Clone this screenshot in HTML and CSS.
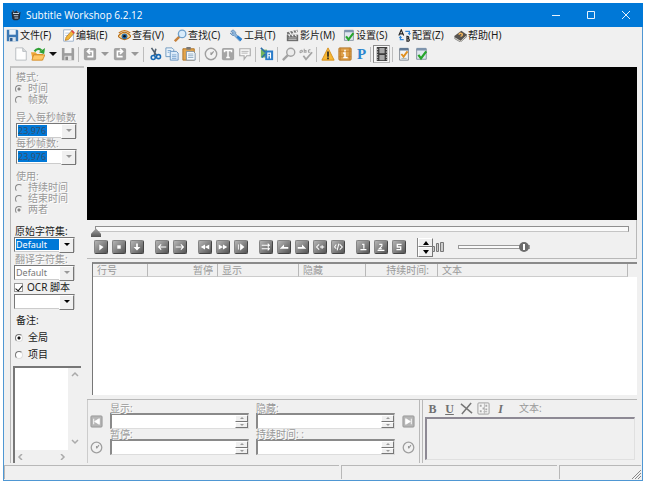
FILE: index.html
```html
<!DOCTYPE html>
<html lang="zh-CN">
<head>
<meta charset="utf-8">
<title>Subtitle Workshop 6.2.12</title>
<link rel="stylesheet" href="styles.css">
</head>
<body>
<svg class="sprite" aria-hidden="true">
  <symbol id="app" viewBox="0 0 16 16"><path d="M2 5l2-4 2 3 3-2 2 3 3-1-1 9-3 2H5l-2-2z" fill="#222b38"/><path d="M4 6h8M5 9h6M6 12h5" stroke="#c9d2dc" stroke-width="1.5"/><path d="M3 2l2 3M9 3l4 2" stroke="#8794a5"/></symbol>
  <symbol id="disk" viewBox="0 0 16 16"><path d="M1 1h13l1 1v13H1z" fill="#3b78b5"/><path d="M4 1h8v6H4z" fill="#e9f2fa"/><path d="M4 10h8v5H4z" fill="#d8e3ec"/><path d="M5 11h3v4H5z" fill="#2b5b91"/></symbol>
  <symbol id="disk-off" viewBox="0 0 16 16"><path d="M1 1h13l1 1v13H1z" fill="#9d9d9d"/><path d="M4 1h8v6H4z" fill="#f3f3f3"/><path d="M4 10h8v5H4z" fill="#e4e4e4"/><path d="M5 11h3v4H5z" fill="#8b8b8b"/></symbol>
  <symbol id="edit" viewBox="0 0 16 16"><path d="M2 1h9l3 3v11H2z" fill="#fff" stroke="#8ba5c4"/><path d="M4 5h5M4 8h4" stroke="#a9c0dc"/><path d="M4 14l1-4 7-8 3 3-7 8z" fill="#f2b63a" stroke="#a86b16" stroke-width=".8"/><path d="M12 2l3 3" stroke="#d44" stroke-width="2"/></symbol>
  <symbol id="eye" viewBox="0 0 16 16"><path d="M0 9q8-10 16 0-8 8-16 0z" fill="#f9d79a" stroke="#b66a12" stroke-width="1.4"/><circle cx="8" cy="9" r="3.6" fill="#2e6da4"/><circle cx="8" cy="9" r="1.6" fill="#111"/><path d="M1 5q7-6 14 0" fill="none" stroke="#c97a1c" stroke-width="1.5"/></symbol>
  <symbol id="find" viewBox="0 0 16 16"><path d="M7 9l-6 6" stroke="#c6803b" stroke-width="3"/><circle cx="10" cy="6" r="4.6" fill="#d9ecfb" stroke="#6f9fca" stroke-width="1.6"/></symbol>
  <symbol id="find-off" viewBox="0 0 16 16"><path d="M7 9l-6 6" stroke="#a2a2a2" stroke-width="2.6"/><circle cx="10" cy="6" r="4.6" fill="#ececec" stroke="#a2a2a2" stroke-width="1.6"/></symbol>
  <symbol id="wrench" viewBox="0 0 16 16"><path d="M1 3l3-2 3 3v2l7 7-2 2-7-7H3L0 5l2 1 2-1z" fill="#8fb6dc" stroke="#4d7cab" stroke-width=".8"/><path d="M8 10l2-2 5 4-2 3z" fill="#2a7fd0"/></symbol>
  <symbol id="clap" viewBox="0 0 16 16"><path d="M1 7h14v8H1z" fill="#6b6b6b"/><path d="M1 4l13-3 .6 2.600L1.600 7z" fill="#777"/><path d="M4 3l2 3M8 2l2 3M12 1.500l1.500 2.500M3 7l2 2M7 7l2 2M11 7l2 2" stroke="#fff" stroke-width="1.300"/><path d="M3 11h10M3 13h10" stroke="#ccc"/></symbol>
  <symbol id="check-doc" viewBox="0 0 16 16"><path d="M3 2h11v12H3z" fill="#dfe6ee" stroke="#7d8a99"/><path d="M3 1h11v3H3z" fill="#7f95ad"/><path d="M5 9l3 4 6-8" fill="none" stroke="#26a52b" stroke-width="2.6"/></symbol>
  <symbol id="check-org" viewBox="0 0 16 16"><path d="M3 2h10v13H3z" fill="#f2f4f7" stroke="#767f8a"/><path d="M3 1h10v3H3z" fill="#5f7894"/><path d="M5 13h6" stroke="#9aa"/><path d="M5 8l2.500 3L12 5" fill="none" stroke="#e09020" stroke-width="2.200"/></symbol>
  <symbol id="ab" viewBox="0 0 16 16"><path d="M1 8l3-7 3 7M2 6h4" fill="none" stroke="#222" stroke-width="1.400"/><path d="M11 9v6h2q2-1 0-3 1-3-2-3zm0 3h2" fill="none" stroke="#222" stroke-width="1.400"/><path d="M9 3h5v3M7 13H3v-3" fill="none" stroke="#2f86d8" stroke-width="1.600"/><path d="M12 5h4l-2 3zM1 11h4l-2-3z" fill="#2f86d8"/></symbol>
  <symbol id="book" viewBox="0 0 16 16"><path d="M0 9l9-7 7 5-8 8z" fill="#58544f"/><path d="M1 10l7 4 8-7v2l-8 7-7-4z" fill="#ece8df" stroke="#444" stroke-width=".7"/><path d="M6 7q1-3 4-1 1 2-2 3" fill="none" stroke="#f0b35c" stroke-width="1.800"/></symbol>
  <symbol id="new" viewBox="0 0 16 16"><path d="M2 1h8l4 4v10H2z" fill="#fdfdfd" stroke="#b4b8bd"/><path d="M10 1v4h4" fill="#ddd" stroke="#b4b8bd"/></symbol>
  <symbol id="open" viewBox="0 0 16 16"><path d="M0 6h5l2 2h7v7H2z" fill="#eda63a"/><path d="M3 9h13l-3 6H1z" fill="#ffc764" stroke="#c77d18" stroke-width=".8"/><path d="M4 5q4-5 8-1" fill="none" stroke="#31a136" stroke-width="2.500"/><path d="M9 6l6 2 1-7z" fill="#31a136"/></symbol>
  <symbol id="undo" viewBox="0 0 16 16"><rect x="1" y="1" width="14" height="14" rx="2" fill="#a3a3a3"/><path d="M5 11h6V5H6M8 2L5 5l3 3" fill="none" stroke="#fff" stroke-width="1.800"/></symbol>
  <symbol id="redo" viewBox="0 0 16 16"><rect x="1" y="1" width="14" height="14" rx="2" fill="#a3a3a3"/><path d="M11 11H5V5h5M8 2l3 3-3 3" fill="none" stroke="#fff" stroke-width="1.800"/></symbol>
  <symbol id="cut" viewBox="0 0 16 16"><path d="M4 1l6 9M9 2L7 10" stroke="#506070" stroke-width="1.800"/><circle cx="6" cy="12" r="2.300" fill="none" stroke="#1769b5" stroke-width="1.800"/><circle cx="12" cy="11" r="2.300" fill="none" stroke="#1769b5" stroke-width="1.800"/></symbol>
  <symbol id="copy" viewBox="0 0 16 16"><path d="M1 1h7l2 2v8H1z" fill="#eaf3fb" stroke="#6792bc"/><path d="M6 5h7l2 2v8H6z" fill="#dcebf9" stroke="#5f8fbe"/><path d="M3 4h4M3 6h2M8 9h5M8 11h5M8 13h5" stroke="#77a4cf"/></symbol>
  <symbol id="paste" viewBox="0 0 16 16"><path d="M1 2h13v13H1z" fill="#e5a54a" stroke="#a96f22"/><path d="M5 0h5v3H5z" fill="#777"/><path d="M5 5h8l2 2v8H5z" fill="#f5f9fc" stroke="#768ca0"/><path d="M7 8h6M7 10h6M7 12h6" stroke="#8ba8c2"/></symbol>
  <symbol id="clock" viewBox="0 0 16 16"><circle cx="8" cy="8" r="6.500" fill="#f2f2f2" stroke="#a0a0a0" stroke-width="1.600"/><path d="M8 9V6M8 9l3-4" stroke="#979797" stroke-width="1.300"/></symbol>
  <symbol id="tee" viewBox="0 0 16 16"><rect x="1" y="1" width="14" height="14" rx="2" fill="#a5a5a5"/><path d="M4 6V4h8v2M8 4v8M6 12h4" fill="none" stroke="#fff" stroke-width="1.700"/></symbol>
  <symbol id="bubble" viewBox="0 0 16 16"><path d="M2 2h12v8h-4l-3 4v-4H2z" fill="#f7f7f7" stroke="#aaa" stroke-width="1.300"/><path d="M4 5h8M4 7h7" stroke="#b0b0b0"/></symbol>
  <symbol id="trans" viewBox="0 0 16 16"><path d="M1 3h7v9H1z" fill="#73b45d"/><path d="M6 4h9v11H6z" fill="#2b7cc9"/><path d="M9 13V7h3v6M9 10h3" fill="none" stroke="#fff" stroke-width="1.300"/><path d="M1 1l5 5M2 12l4-4" stroke="#2a6da8" stroke-width="1.800"/></symbol>
  <symbol id="spell" viewBox="0 0 16 16"><path d="M1 5q3-3 3 1M1 5q0 3 3 0M6 2v4h2V4H6M13 3q-3 0-2 3h2" fill="none" stroke="#a4a4a4" stroke-width="1.300"/><path d="M5 10l3 4 7-8" fill="none" stroke="#a4a4a4" stroke-width="2"/></symbol>
  <symbol id="warn" viewBox="0 0 16 16"><path d="M8 1l7 14H1z" fill="#f8b833" stroke="#d58a12"/><path d="M8 5v6M8 12v2" stroke="#222" stroke-width="1.800"/></symbol>
  <symbol id="info" viewBox="0 0 16 16"><rect x="1" y="1" width="14" height="14" rx="1" fill="#e0a34e" stroke="#ad6d1c"/><path d="M3 1v14M13 1v14M1 5h14M1 11h14" stroke="#c6822d"/><path d="M6 7h2v5M6 12h5M8 3v2" fill="none" stroke="#fff" stroke-width="1.800"/></symbol>
  <symbol id="film" viewBox="0 0 16 16"><path d="M2 0h12v16H2z" fill="#3b3b3b"/><path d="M5 1h6v6H5zM5 9h6v6H5z" fill="#a8a8a8"/><path d="M3 2v13M13 2v13" stroke="#ddd" stroke-dasharray="1.500 1.500"/></symbol>
  <symbol id="m-play" viewBox="0 0 14 14"><path d="M5 4l5 3-5 4z" fill="#fff"/></symbol>
  <symbol id="m-stop" viewBox="0 0 14 14"><path d="M5 5h4v4H5z" fill="#fff"/></symbol>
  <symbol id="m-down" viewBox="0 0 14 14"><path d="M6 3h2v4h3l-4 4-4-4h3z" fill="#fff"/></symbol>
  <symbol id="m-left" viewBox="0 0 14 14"><path d="M12 7H3M6 4L3 7l3 3" fill="none" stroke="#fff" stroke-width="1.300"/></symbol>
  <symbol id="m-right" viewBox="0 0 14 14"><path d="M2 7h9M8 4l3 3-3 3" fill="none" stroke="#fff" stroke-width="1.300"/></symbol>
  <symbol id="m-rew" viewBox="0 0 14 14"><path d="M7 4v6L2 7zM12 4v6L7 7z" fill="#fff"/></symbol>
  <symbol id="m-fwd" viewBox="0 0 14 14"><path d="M2 4v6l5-3zM7 4v6l5-3z" fill="#fff"/></symbol>
  <symbol id="m-step" viewBox="0 0 14 14"><path d="M4 4v6" stroke="#fff"/><path d="M6 3v8l5-4z" fill="#fff"/></symbol>
  <symbol id="m-swap" viewBox="0 0 14 14"><path d="M2 5h9M9 3l2 2-2 2M2 9h9M9 7l2 2-2 2" fill="none" stroke="#fff" stroke-width="1.200"/></symbol>
  <symbol id="m-in" viewBox="0 0 14 14"><path d="M2 9l5-5v3h5v2z" fill="#fff"/></symbol>
  <symbol id="m-out" viewBox="0 0 14 14"><path d="M12 9L7 4v3H2v2z" fill="#fff"/></symbol>
  <symbol id="m-add" viewBox="0 0 14 14"><path d="M6 4L3 7l3 3M7 7h5M9.500 5v4" fill="none" stroke="#fff" stroke-width="1.200"/></symbol>
  <symbol id="m-split" viewBox="0 0 14 14"><path d="M5 4L3 7l2 2M9 4l3 3-3 3M8 3L6 11" fill="none" stroke="#fff" stroke-width="1.200"/></symbol>
  <symbol id="m-one" viewBox="0 0 14 14"><path d="M6 4h2v5M4 10h7" fill="none" stroke="#fff" stroke-width="1.400"/></symbol>
  <symbol id="m-two" viewBox="0 0 14 14"><path d="M5 4h3v2L5 9h3M3 11h8" fill="none" stroke="#fff" stroke-width="1.300"/></symbol>
  <symbol id="m-sync" viewBox="0 0 14 14"><path d="M10 4H5v3h4v3H4" fill="none" stroke="#fff" stroke-width="1.500"/></symbol>
  <symbol id="set-start" viewBox="0 0 14 14"><rect x="1" y="1" width="12" height="12" rx="1" fill="#b5b5b5" stroke="#969696"/><path d="M4 4v6M10 4v6L5 7z" fill="#fff" stroke="#fff"/></symbol>
  <symbol id="set-end" viewBox="0 0 14 14"><rect x="1" y="1" width="12" height="12" rx="1" fill="#b5b5b5" stroke="#969696"/><path d="M10 4v6M4 4v6l5-3z" fill="#fff" stroke="#fff"/></symbol>
  <symbol id="ex" viewBox="0 0 14 14"><path d="M1 2l12 10M12 1L2 13" stroke="#777" stroke-width="1.600"/></symbol>
  <symbol id="palette" viewBox="0 0 14 14"><rect x="1" y="1" width="12" height="12" rx="1" fill="#f5f5f5" stroke="#999"/><path d="M3 3h2v2H3zM6 6h2v2H6zM9 3h2v2H9zM9 7h2v2H9zM3 9h2v2H3zM7 10h4v1H7z" fill="#aaa"/><path d="M8 1v12" stroke="#bbb"/></symbol>
</svg>

<div class="window">
  <header class="titlebar">
    <svg class="logo"><use href="#app"/></svg>
    <h1>Subtitle Workshop 6.2.12</h1>
    <button class="caption" aria-label="最小化"><svg viewBox="0 0 10 10"><path d="M1 5.500h8"/></svg></button>
    <button class="caption" aria-label="最大化"><svg viewBox="0 0 10 10"><path d="M1.500 1.500h7v7h-7z"/></svg></button>
    <button class="caption" aria-label="关闭"><svg viewBox="0 0 10 10"><path d="M1 1l8 8M9 1L1 9"/></svg></button>
  </header>

  <nav class="menu">
    <button><svg><use href="#disk"/></svg>文件(F)</button>
    <button><svg><use href="#edit"/></svg>编辑(E)</button>
    <button><svg><use href="#eye"/></svg>查看(V)</button>
    <button><svg><use href="#find"/></svg>查找(C)</button>
    <button><svg><use href="#wrench"/></svg>工具(T)</button>
    <button><svg><use href="#clap"/></svg>影片(M)</button>
    <button><svg><use href="#check-doc"/></svg>设置(S)</button>
    <button><svg><use href="#ab"/></svg>配置(Z)</button>
    <button><svg><use href="#book"/></svg>帮助(H)</button>
  </nav>

  <div class="tools">
    <button aria-label="新建"><svg><use href="#new"/></svg></button>
    <button aria-label="打开"><svg><use href="#open"/></svg></button>
    <button class="drop" aria-label="最近文件"></button>
    <button aria-label="保存"><svg><use href="#disk-off"/></svg></button>
    <span class="sep"></span>
    <button aria-label="撤销"><svg><use href="#undo"/></svg></button>
    <button class="drop off" aria-label="撤销列表"></button>
    <button aria-label="重做"><svg><use href="#redo"/></svg></button>
    <button class="drop off" aria-label="重做列表"></button>
    <span class="sep"></span>
    <button aria-label="剪切"><svg><use href="#cut"/></svg></button>
    <button aria-label="复制"><svg><use href="#copy"/></svg></button>
    <button aria-label="粘贴"><svg><use href="#paste"/></svg></button>
    <span class="sep"></span>
    <button aria-label="时间"><svg><use href="#clock"/></svg></button>
    <button aria-label="文本"><svg><use href="#tee"/></svg></button>
    <button aria-label="字幕"><svg><use href="#bubble"/></svg></button>
    <span class="sep"></span>
    <button aria-label="翻译"><svg><use href="#trans"/></svg></button>
    <span class="sep"></span>
    <button aria-label="查找"><svg><use href="#find-off"/></svg></button>
    <button aria-label="拼写"><svg><use href="#spell"/></svg></button>
    <span class="sep"></span>
    <button aria-label="检查错误"><svg><use href="#warn"/></svg></button>
    <button aria-label="信息"><svg><use href="#info"/></svg></button>
    <button class="pascal">P</button>
    <span class="sep tight"></span>
    <button class="pressed" aria-label="视频预览"><svg><use href="#film"/></svg></button>
    <span class="sep"></span>
    <button aria-label="选项"><svg><use href="#check-org"/></svg></button>
    <button aria-label="设置"><svg><use href="#check-doc"/></svg></button>
  </div>

  <main class="workspace">
    <aside class="side">
      <div class="set off">
        <p>模式:</p>
        <label><input type="radio" name="mode" checked disabled>时间</label>
        <label><input type="radio" name="mode" disabled>帧数</label>
      </div>
      <div class="set off indent">
        <label for="fps-in">导入每秒帧数</label>
        <span class="combo dim"><select id="fps-in" class="marked" disabled><option>23,976</option></select></span>
        <label for="fps">每秒帧数:</label>
        <span class="combo dim"><select id="fps" class="marked" disabled><option>23,976</option></select></span>
      </div>
      <div class="set off use">
        <p>使用:</p>
        <label><input type="radio" name="use" disabled>持续时间</label>
        <label><input type="radio" name="use" disabled>结束时间</label>
        <label><input type="radio" name="use" checked disabled>两者</label>
      </div>
      <div class="set charset">
        <label for="cs-orig">原始字符集:</label>
        <span class="combo"><select id="cs-orig" class="focused"><option>Default</option></select></span>
        <label for="cs-tr" class="faint">翻译字符集:</label>
        <span class="combo dim"><select id="cs-tr" disabled><option>Default</option></select></span>
        <label class="ocr"><input type="checkbox" checked>OCR 脚本</label>
        <span class="combo"><select aria-label="OCR 脚本"><option></option></select></span>
      </div>
      <div class="set notes">
        <p>备注:</p>
        <label><input type="radio" name="note" checked>全局</label>
        <label><input type="radio" name="note">项目</label>
      </div>
      <div class="memo">
        <textarea aria-label="备注"></textarea>
        <div class="vbar"><svg viewBox="0 0 8 6"><path d="M1 5l3-3 3 3"/></svg><svg viewBox="0 0 8 6"><path d="M1 1l3 3 3-3"/></svg></div>
        <div class="hbar"><svg viewBox="0 0 8 6"><path d="M5 0L2 3l3 3"/></svg><svg viewBox="0 0 8 6"><path d="M3 0l3 3-3 3"/></svg></div>
      </div>
    </aside>

    <section class="content">
      <div class="video"></div>
      <div class="player">
        <input class="seek" type="range" min="0" max="100" value="0" aria-label="位置">
        <div class="transport">
          <div class="grp"><button aria-label="播放"><svg><use href="#m-play"/></svg></button><button aria-label="停止"><svg><use href="#m-stop"/></svg></button><button aria-label="滚动"><svg><use href="#m-down"/></svg></button></div>
          <div class="grp"><button aria-label="上一条"><svg><use href="#m-left"/></svg></button><button aria-label="下一条"><svg><use href="#m-right"/></svg></button></div>
          <div class="grp"><button aria-label="后退"><svg><use href="#m-rew"/></svg></button><button aria-label="快进"><svg><use href="#m-fwd"/></svg></button><button aria-label="速度"><svg><use href="#m-step"/></svg></button></div>
          <div class="grp"><button aria-label="移动字幕"><svg><use href="#m-swap"/></svg></button><button aria-label="开始时间"><svg><use href="#m-in"/></svg></button><button aria-label="结束时间"><svg><use href="#m-out"/></svg></button><button aria-label="开始字幕"><svg><use href="#m-add"/></svg></button><button aria-label="结束字幕"><svg><use href="#m-split"/></svg></button></div>
          <div class="grp"><button aria-label="第一同步点"><svg><use href="#m-one"/></svg></button><button aria-label="最后同步点"><svg><use href="#m-two"/></svg></button><button aria-label="同步"><svg><use href="#m-sync"/></svg></button></div>
          <div class="updown"><button aria-label="增加"></button><button aria-label="减少"></button></div>
          <svg class="bars" viewBox="0 0 12 12"><path d="M.500 5.500h2v5h-2zM4.500 2.500h2v8h-2zM8.500 1.500h3v9h-3z"/></svg>
          <input class="volume" type="range" min="0" max="100" value="100" aria-label="音量">
        </div>
      </div>

      <div class="list">
        <table>
          <thead><tr><th class="c-num">行号</th><th class="c-pause">暂停</th><th class="c-show">显示</th><th class="c-hide">隐藏</th><th class="c-dur">持续时间:</th><th>文本</th></tr></thead>
          <tbody></tbody>
        </table>
      </div>

      <div class="editor">
        <div class="times">
          <button class="jump" aria-label="设为开始"><svg><use href="#set-start"/></svg></button>
          <div class="field"><label for="t-show">显示:</label><div class="spin"><input id="t-show" type="text"><span class="updown"><button aria-label="增加"></button><button aria-label="减少"></button></span></div></div>
          <div class="field"><label for="t-hide">隐藏:</label><div class="spin"><input id="t-hide" type="text"><span class="updown"><button aria-label="增加"></button><button aria-label="减少"></button></span></div></div>
          <button class="jump" aria-label="设为结束"><svg><use href="#set-end"/></svg></button>
          <button class="jump" aria-label="暂停时间"><svg><use href="#clock"/></svg></button>
          <div class="field"><label for="t-pause">暂停:</label><div class="spin"><input id="t-pause" type="text"><span class="updown"><button aria-label="增加"></button><button aria-label="减少"></button></span></div></div>
          <div class="field"><label for="t-dur">持续时间: :</label><div class="spin"><input id="t-dur" type="text"><span class="updown"><button aria-label="增加"></button><button aria-label="减少"></button></span></div></div>
          <button class="jump" aria-label="持续时间"><svg><use href="#clock"/></svg></button>
        </div>
        <div class="texts">
          <div class="format">
            <button class="b">B</button><button class="u">U</button><button aria-label="清除格式"><svg><use href="#ex"/></svg></button><button aria-label="颜色"><svg><use href="#palette"/></svg></button><button class="i">I</button>
            <label for="sub-text">文本:</label>
          </div>
          <textarea id="sub-text" disabled></textarea>
        </div>
      </div>
    </section>
  </main>

  <footer class="status"><span></span><span></span><span><svg class="grip" viewBox="0 0 10 10"><path d="M1 10l9-9M4 10l6-6M7 10l3-3"/></svg></span></footer>
</div>
</body>
</html>
```

FILE: styles.css
```css
:root {
  --face: #f0f0f0;
  --shadow: #8a8a8a;
  --edge: #b8b8b8;
  --muted: #999;
  --blue: #0078d7;
}

* { box-sizing: border-box; }

body {
  margin: 0;
  padding: 3px;
  height: 100vh;
  background: #fff;
  color: #1a1a1a;
  font: 10px/11px "Noto Sans", "Noto Sans CJK SC", sans-serif;
}

button, input, select, textarea {
  margin: 0;
  padding: 0;
  border: 0;
  border-radius: 0;
  background: none;
  color: inherit;
  font: inherit;
}

button {
  display: flex;
  align-items: center;
  justify-content: center;
}

p { margin: 0; }
textarea { resize: none; display: block; }
.sprite { position: absolute; width: 0; height: 0; }

.window {
  display: flex;
  flex-direction: column;
  height: 100%;
  background: var(--face);
  border: 1px solid #4f97d3;
  border-top: 0;
}

.titlebar {
  display: flex;
  align-items: center;
  height: 24px;
  margin: 0 -1px;
  padding: 0 0 0 7px;
  background: var(--blue);
  color: #fff;
}
.titlebar .logo { width: 12px; height: 12px; }
.titlebar h1 {
  flex: 1;
  margin: 0 0 0 4px;
  font: 10px/14px "Open Sans", sans-serif;
}
.caption { width: 35px; height: 24px; }
.caption svg { width: 10px; height: 10px; fill: none; stroke: #e6f2fc; }

.menu {
  display: flex;
  flex: none;
  height: 17px;
  padding-left: 2px;
}
.menu button {
  flex: 0 0 56px;
  justify-content: flex-start;
  gap: 1px;
  white-space: nowrap;
}
.menu svg { flex: none; width: 13px; height: 13px; }

.tools {
  display: flex;
  flex: none;
  align-items: center;
  height: 20px;
  padding-left: 8px;
}
.tools button { width: 17px; height: 18px; }
.tools svg { width: 14px; height: 14px; }
.tools .drop { width: 13px; }
.tools .pascal { color: #2a86cf; font: 700 15px/18px "Liberation Serif", serif; }
.drop::after {
  content: "";
  border: 4px solid transparent;
  border-top-color: #111;
  border-bottom: 0;
}
.drop.off::after { border-top-color: #999; }
.sep { width: 5px; height: 15px; border-left: 2px solid transparent; }
.sep::before { content: ""; display: block; width: 1px; height: 15px; background: #bdbdbd; }
.sep.tight { width: 3px; border-left-width: 0; }
.tools .pressed { border: 1px solid var(--edge); border-top-color: var(--shadow); border-left-color: var(--shadow); background: #f8f8f8; }
.tools .pressed svg { width: 14px; height: 14px; }

.workspace {
  display: grid;
  grid-template-columns: 74px 1fr;
  gap: 3px;
  flex: 1;
  min-height: 0;
  padding: 2px 5px 2px 6px;
}

.side {
  display: flex;
  flex-direction: column;
  padding: 4px 3px 0 2px;
  border-top: 2px solid #c4c4c4;
  border-left: 1px solid var(--edge);
}
.set { display: flex; flex-direction: column; padding-left: 1px; }
.set > p, .set > label { height: 11px; padding-left: 2px; white-space: nowrap; }
.set > label:has(input) { display: flex; align-items: center; gap: 5px; padding-left: 1px; }
.set.off, .faint { color: var(--muted); text-shadow: 1px 1px #fff; }
.set.off { font-family: "Liberation Sans", "Noto Sans CJK SC", sans-serif; }
.indent { margin-top: 7px; }
.use { margin-top: 7px; }
.charset { margin-top: 11px; padding-left: 0; }
.charset .combo { margin-left: 1px; }
.charset .faint { margin-top: 2px; }
.set > label.ocr { margin: 2px 0 1px; gap: 4px; padding-left: 1px; }
.notes { margin-top: 6px; gap: 6px; }

input[type="radio"] {
  appearance: none;
  flex: none;
  width: 8px;
  height: 8px;
  border: 1px solid #777;
  border-right-color: #ddd;
  border-bottom-color: #ddd;
  border-radius: 50%;
  background: #fff;
}
input[type="radio"]:checked { background: radial-gradient(#111 0 1px, #fff 2px); }
input[type="radio"]:disabled { background: var(--face); border-color: #888 #eee #eee #888; }
input[type="radio"]:disabled:checked { background: radial-gradient(#888 0 1px, var(--face) 2px); }
input[type="checkbox"] {
  appearance: none;
  flex: none;
  display: grid;
  place-items: center;
  width: 9px;
  height: 9px;
  border: 1px solid #999;
  background: #fff;
}
input[type="checkbox"]:checked::after {
  content: "";
  width: 3px;
  height: 6px;
  border: solid #111;
  border-width: 0 1px 1px 0;
  transform: rotate(40deg);
}

.combo {
  position: relative;
  width: 61px;
  height: 15px;
  border: 1px solid #777;
  border-right-color: #ccc;
  border-bottom-color: #ccc;
  background: #fff;
}
.indent .combo { margin-left: 2px; }
.combo select {
  appearance: none;
  display: block;
  width: 100%;
  height: 13px;
  padding: 0 13px 0 1px;
  font: 9px/13px "Noto Sans", sans-serif;
  opacity: 1;
}
.combo::before {
  content: "";
  position: absolute;
  top: 0;
  right: 0;
  width: 13px;
  height: 13px;
  background: var(--face);
  border: 1px solid #fff;
  border-right-color: #777;
  border-bottom-color: #777;
}
.combo::after {
  content: "";
  position: absolute;
  top: 5px;
  right: 4px;
  border: 3px solid transparent;
  border-top-color: #000;
  border-bottom: 0;
}
.combo.dim::after { border-top-color: #999; }
.combo.dim select { color: #777; text-shadow: none; }
.combo.dim select.marked {
  color: #37506e;
  background: linear-gradient(var(--blue), var(--blue)) 1px 1px / 29px 11px no-repeat;
}
.combo select.focused {
  color: #fff;
  background: linear-gradient(var(--blue), var(--blue)) 1px 1px / 45px 11px no-repeat;
}

.memo {
  display: grid;
  grid-template: 1fr 13px / 1fr 13px;
  flex: 1;
  min-height: 0;
  margin-top: 6px;
  border-top: 2px solid #777;
  border-left: 2px solid #777;
  background: var(--face);
}
.memo textarea { width: 100%; height: 100%; background: #fff; }
.memo svg { width: 8px; height: 6px; fill: none; stroke: #aaa; stroke-width: 1.500; }
.vbar { display: flex; flex-direction: column; align-items: center; justify-content: space-between; padding: 3px 0 5px; }
.hbar { display: flex; justify-content: space-between; align-items: center; padding: 0 2px; }

.content { display: flex; flex-direction: column; min-width: 0; min-height: 0; }
.video { flex: 7; margin-top: 1px; background: #000; }

.player {
  flex: none;
  height: 39px;
  padding: 5px 7px 0 8px;
  border-right: 1px solid var(--edge);
  border-bottom: 1px solid var(--edge);
}
input[type="range"] { appearance: none; display: block; }
.seek { width: 100%; height: 13px; }
.seek::-webkit-slider-runnable-track {
  height: 6px;
  margin-top: -4px;
  border: 1px solid #8f8f8f;
  border-bottom-color: #c5c5c5;
  background: #fafafa;
}
.seek::-webkit-slider-thumb {
  appearance: none;
  width: 10px;
  height: 9px;
  margin: 1px 0 0 -5px;
  background: linear-gradient(#aaa, #555);
  clip-path: polygon(50% 0, 100% 60%, 100% 100%, 0 100%, 0 60%);
}

.transport { display: flex; align-items: center; gap: 11px; height: 19px; margin-left: -1px; }
.grp { display: grid; grid-auto-flow: column; grid-auto-columns: 14px; gap: 4px; }
.grp button {
  height: 14px;
  border-radius: 2px;
  background: linear-gradient(135deg, #b5b5b5, #555);
  border: 1px solid #858585;
  border-right-color: #444;
  border-bottom-color: #444;
}
.grp svg { flex: none; width: 12px; height: 12px; }
.updown { display: flex; flex-direction: column; flex: none; }
.updown button { flex: 1; border: 1px solid #fff; border-right-color: #777; border-bottom-color: #777; background: var(--face); }
.updown button::after { content: ""; border: 2px solid transparent; border-top: 0; border-bottom-color: #999; }
.updown button:last-child::after { border-top: 2px solid #999; border-bottom: 0; }
.transport .updown { width: 16px; height: 19px; border-left: 1px solid #888; }
.transport .updown button::after { border-width: 0 3px 4px; border-bottom-color: #000; }
.transport .updown button:last-child::after { border-width: 4px 3px 0; border-top-color: #000; }
.bars { width: 12px; height: 12px; margin-left: -12px; fill: #ccc; stroke: #777; }
.volume { width: 72px; height: 12px; margin-left: 3px; }
.volume::-webkit-slider-runnable-track { height: 4px; border: 1px solid #999; background: #fafafa; }
.volume::-webkit-slider-thumb {
  appearance: none;
  width: 10px;
  height: 10px;
  margin-top: -4px;
  border-radius: 50%;
  background: linear-gradient(#fff, #fff) center / 2px 6px no-repeat, #6c6c6c;
}

.list {
  flex: 6;
  min-height: 0;
  margin: 3px 0 4px 5px;
  border-top: 2px solid var(--shadow);
  border-left: 1px solid #777;
  background: linear-gradient(var(--face) 13px, #fff 13px);
}
.list table { width: calc(100% - 9px); table-layout: fixed; border-collapse: separate; border-spacing: 0; }
.list th {
  height: 13px;
  padding: 1px 4px 0;
  border-right: 1px solid var(--edge);
  border-bottom: 1px solid #ccc;
  color: var(--muted);
  font-weight: 400;
  text-align: left;
  white-space: nowrap;
}
.list .c-num { width: 55px; }
.list .c-pause { width: 70px; text-align: right; }
.list .c-show { width: 81px; }
.list .c-hide { width: 67px; }
.list .c-dur { width: 72px; padding-right: 8px; text-align: right; }

.editor {
  display: grid;
  grid-template-columns: 333px 1fr;
  gap: 2px;
  flex: none;
  height: 64px;
  border-top: 1px solid var(--edge);
}
.times {
  display: grid;
  grid-template-columns: 13px 139px 139px 13px;
  grid-auto-rows: 26px;
  column-gap: 7px;
  padding: 3px 0 0 2px;
  border-left: 1px solid #ccc;
  border-right: 1px solid var(--edge);
  color: var(--muted);
  text-shadow: 1px 1px #fff;
}
.field label { display: block; height: 10px; line-height: 10px; }
.spin { display: flex; height: 16px; border: 1px solid #ddd; border-top: 2px solid var(--shadow); border-left: 2px solid var(--shadow); background: #fff; }
.spin input { flex: 1; min-width: 0; }
.spin .updown { width: 13px; }
.jump { align-self: end; height: 16px; }
.jump svg { width: 13px; height: 13px; }

.texts { display: flex; flex-direction: column; padding: 0 2px 3px; border-left: 1px solid var(--edge); }
.format { display: flex; align-items: center; gap: 2px; height: 17px; color: #707070; }
.format button { width: 15px; height: 15px; font: 700 12px/14px "Liberation Serif", serif; }
.format svg { width: 13px; height: 13px; }
.format .u { text-decoration: underline; }
.format .i { font-style: italic; }
.format label { margin-left: 9px; color: var(--muted); }
.texts textarea { flex: 1; width: 100%; min-height: 0; border: 1px solid #e0e0e0; border-top: 2px solid #8d8994; border-left: 2px solid #8d8994; }

.status { display: grid; grid-template-columns: 335px 216px 1fr; gap: 2px; flex: none; height: 15px; padding: 0 1px 1px 0; }
.status span { display: flex; align-items: flex-end; justify-content: flex-end; border-top: 1px solid var(--edge); border-left: 1px solid var(--edge); }
.grip { width: 10px; height: 10px; stroke: #888; }
```
